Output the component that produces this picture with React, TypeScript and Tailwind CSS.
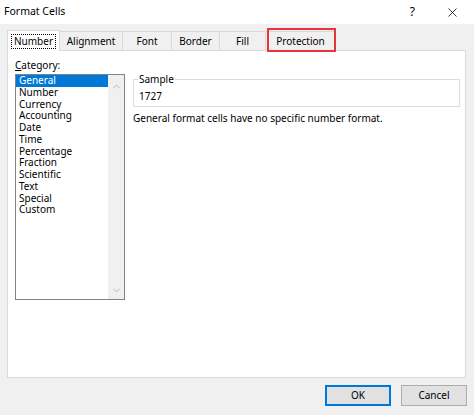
import { X, ChevronUp, ChevronDown } from 'lucide-react';

const tabs = ['Number', 'Alignment', 'Font', 'Border', 'Fill', 'Protection'];
const tabWidths = ['w-[53px]', 'w-[63px]', 'w-[49px]', 'w-[48px]', 'w-[46px]', 'w-[70px]'];

const categories = [
  'General',
  'Number',
  'Currency',
  'Accounting',
  'Date',
  'Time',
  'Percentage',
  'Fraction',
  'Scientific',
  'Text',
  'Special',
  'Custom',
];

export default function App() {
  return (
    <div className="w-[474px] h-[415px] overflow-hidden bg-[#f0f0f0] text-[10px] text-black font-['Noto_Sans',sans-serif]">
      {/* Title bar */}
      <div className="h-[24px] bg-white flex items-center pl-[4px] pr-[14px]">
        <span className="text-[10.5px] flex-1">Format Cells</span>
        <span className="text-[12px] mr-[30px]">?</span>
        <X size={15} strokeWidth={1.2} />
      </div>

      <div className="px-[7px] pt-[6px]">
        {/* Tabs */}
        <div className="flex items-end h-[20px]">
          {tabs.map((t, i) =>
            i === 0 ? (
              <div
                key={t}
                className={`${tabWidths[i]} relative z-10 -mb-px h-[21px] bg-white border border-b-0 border-[#d9d9d9] flex items-center justify-center`}
              >
                <span className="border border-dotted border-black px-[2px] leading-[13px]">{t}</span>
              </div>
            ) : (
              <div
                key={t}
                className={`${tabWidths[i]} relative h-[19px] border border-l-0 border-b-0 border-[#d9d9d9] flex items-center justify-center`}
              >
                {t}
                {t === 'Protection' && (
                  <div className="absolute left-[1px] right-[-1px] top-[-4px] bottom-[-2px] border-2 border-[#e8353b]" />
                )}
              </div>
            )
          )}
        </div>

        {/* Panel */}
        <div className="h-[328px] w-[459px] bg-white border border-[#d9d9d9] flex gap-[8px] pl-[7px] pt-[8px]">
          <div className="flex flex-col">
            <div className="leading-[13px] mb-[2px]">
              <span className="underline">C</span>ategory:
            </div>
            <div className="w-[110px] h-[226px] border border-[#828282] flex">
              <div className="flex-1 flex flex-col">
                {categories.map((c, i) => (
                  <div
                    key={c}
                    className={`h-[11.75px] leading-[11.75px] pl-[3px] ${
                      i === 0 ? 'bg-[#0078d7] text-white' : ''
                    }`}
                  >
                    {c}
                  </div>
                ))}
              </div>
              <div className="w-[16px] bg-[#f0f0f0] flex flex-col items-center justify-between pt-[6px] pb-[3px] text-[#a0a0a0]">
                <ChevronUp size={11} strokeWidth={1.5} />
                <ChevronDown size={11} strokeWidth={1.5} />
              </div>
            </div>
          </div>

          <div className="flex flex-col w-[327px]">
            <fieldset className="border border-[#dcdcdc] h-[34px] pl-[4px] mt-[14px]">
              <legend className="px-[1px] leading-[13px]">Sample</legend>
              <div className="leading-[13px] mt-[4px] pl-[1px]">1727</div>
            </fieldset>
            <div className="mt-[5px] leading-[13px]">General format cells have no specific number format.</div>
          </div>
        </div>

        {/* Buttons */}
        <div className="flex justify-end gap-[10px] pt-[7px] pr-0">
          <button className="w-[66px] h-[21px] bg-[#e1e1e1] border-2 border-[#0078d7] flex items-center justify-center">
            OK
          </button>
          <button className="w-[66px] h-[21px] bg-[#e1e1e1] border border-[#adadad] flex items-center justify-center">
            Cancel
          </button>
        </div>
      </div>
    </div>
  );
}
